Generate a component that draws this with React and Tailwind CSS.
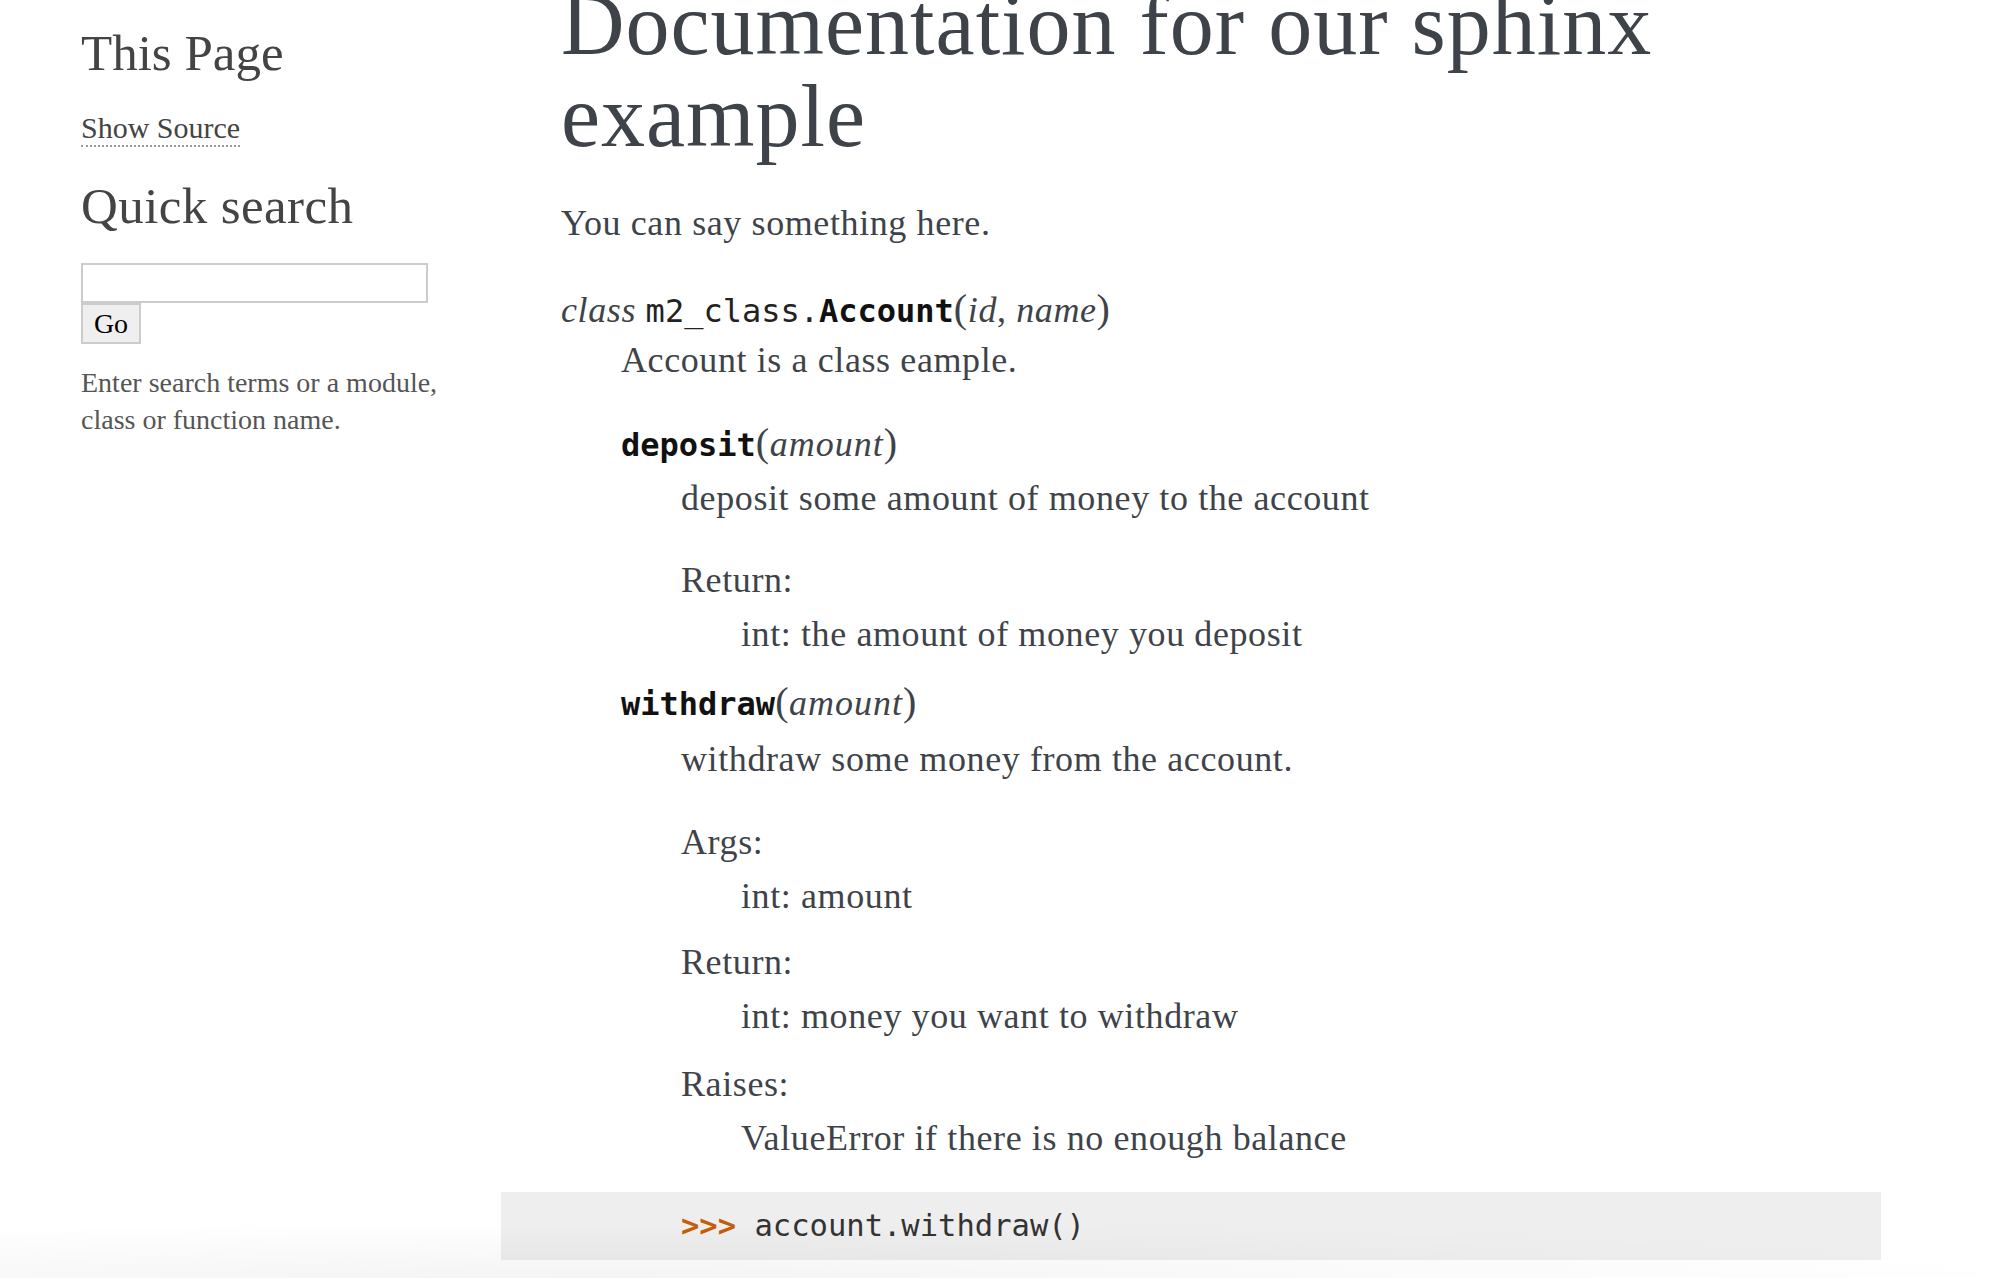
import React from 'react';

const serif = "font-['Liberation_Serif',serif]";
const mono = "font-['DejaVu_Sans_Mono',monospace] tracking-normal";

const Sidebar = () => (
  <div className={`w-[390px] ml-[81px] pt-[23px] shrink-0 ${serif}`}>
    <h3 className="text-[51px] leading-[60px] text-[#444] font-normal">This Page</h3>
    <p className="mt-[25px] text-[30px] leading-[40px]">
      <a href="#" className="text-[#444] border-b-2 border-dotted border-[#999] pb-[1px]">
        Show Source
      </a>
    </p>
    <h3 className="mt-[28px] text-[51px] leading-[60px] text-[#444] font-normal tracking-[0.4px]">Quick search</h3>
    <div className="mt-[27px] flex flex-col items-start">
      <input type="text" className="w-[347px] h-[40px] border-2 border-[#ccc] bg-white outline-none" />
      <button className="w-[60px] h-[41px] border-2 border-[#ccc] bg-[#efefef] text-black text-[28px] leading-none">
        Go
      </button>
    </div>
    <p className="mt-[20px] text-[28px] leading-[37px] text-[#555]">
      Enter search terms or a module, class or function name.
    </p>
  </div>
);

const Paren = ({ children }) => <span className="text-[40px]">{children}</span>;

const Sig = ({ children, className = '' }) => (
  <div className={`h-[48px] leading-[48px] whitespace-nowrap ${className}`}>{children}</div>
);

const Field = ({ label, text, className = '' }) => (
  <div className={className}>
    <div className="leading-[48px]">{label}</div>
    <div className="mt-[6px] pl-[60px] leading-[48px]">{text}</div>
  </div>
);

const Main = () => (
  <div className={`w-[1260px] ml-[90px] shrink-0 text-[#3E4349] text-[36px] tracking-[0.6px] ${serif}`}>
    <h1 className="-mt-[21px] text-[88px] leading-[92px] font-normal tracking-[1px]">
      Documentation for our sphinx example
    </h1>
    <p className="mt-[36px] leading-[48px]">You can say something here.</p>

    <div className="mt-[38px]">
      <Sig>
        <em>class</em>{' '}
        <span className={`${mono} text-[32px] text-[#222]`}>m2_class.</span>
        <span className={`${mono} text-[32px] font-bold text-[#111]`}>Account</span>
        <Paren>(</Paren>
        <em>id</em>, <em>name</em>
        <Paren>)</Paren>
      </Sig>
      <div className="pl-[60px]">
        <p className="mt-[3px] leading-[48px]">Account is a class eample.</p>

        {/* deposit */}
        <Sig className="mt-[35px]">
          <span className={`${mono} text-[32px] font-bold text-[#111]`}>deposit</span>
          <Paren>(</Paren>
          <em className="tracking-[1px]">amount</em>
          <Paren>)</Paren>
        </Sig>
        <div className="pl-[60px]">
          <p className="mt-[7px] leading-[48px]">deposit some amount of money to the account</p>
          <Field className="mt-[34px]" label="Return:" text="int: the amount of money you deposit" />
        </div>

        {/* withdraw */}
        <Sig className="mt-[20px]">
          <span className={`${mono} text-[32px] font-bold text-[#111]`}>withdraw</span>
          <Paren>(</Paren>
          <em className="tracking-[1px]">amount</em>
          <Paren>)</Paren>
        </Sig>
        <div className="pl-[60px]">
          <p className="mt-[9px] leading-[48px]">withdraw some money from the account.</p>
          <Field className="mt-[35px]" label="Args:" text="int: amount" />
          <Field className="mt-[18px]" label="Return:" text="int: money you want to withdraw" />
          <Field className="mt-[20px]" label="Raises:" text="ValueError if there is no enough balance" />
        </div>
      </div>
    </div>

    <pre className={`mt-[30px] -ml-[60px] w-[1380px] h-[68px] pl-[180px] pt-[12px] bg-[#eeeeee] ${mono} text-[30.5px] leading-[44px] text-[#333]`}>
      <span className="text-[#c65d09] font-bold">&gt;&gt;&gt;</span> account.withdraw()
    </pre>
  </div>
);

export default function App() {
  return (
    <div className="relative w-full h-[1278px] overflow-hidden bg-white">
      <div className="flex items-start">
        <Sidebar />
        <Main />
      </div>
      {/* soft fade at the bottom edge of the window */}
      <div className="pointer-events-none absolute left-0 bottom-0 w-full h-[70px] bg-[radial-gradient(ellipse_90%_100%_at_30%_100%,rgba(0,0,0,0.045),rgba(0,0,0,0)_80%)]" />
    </div>
  );
}
